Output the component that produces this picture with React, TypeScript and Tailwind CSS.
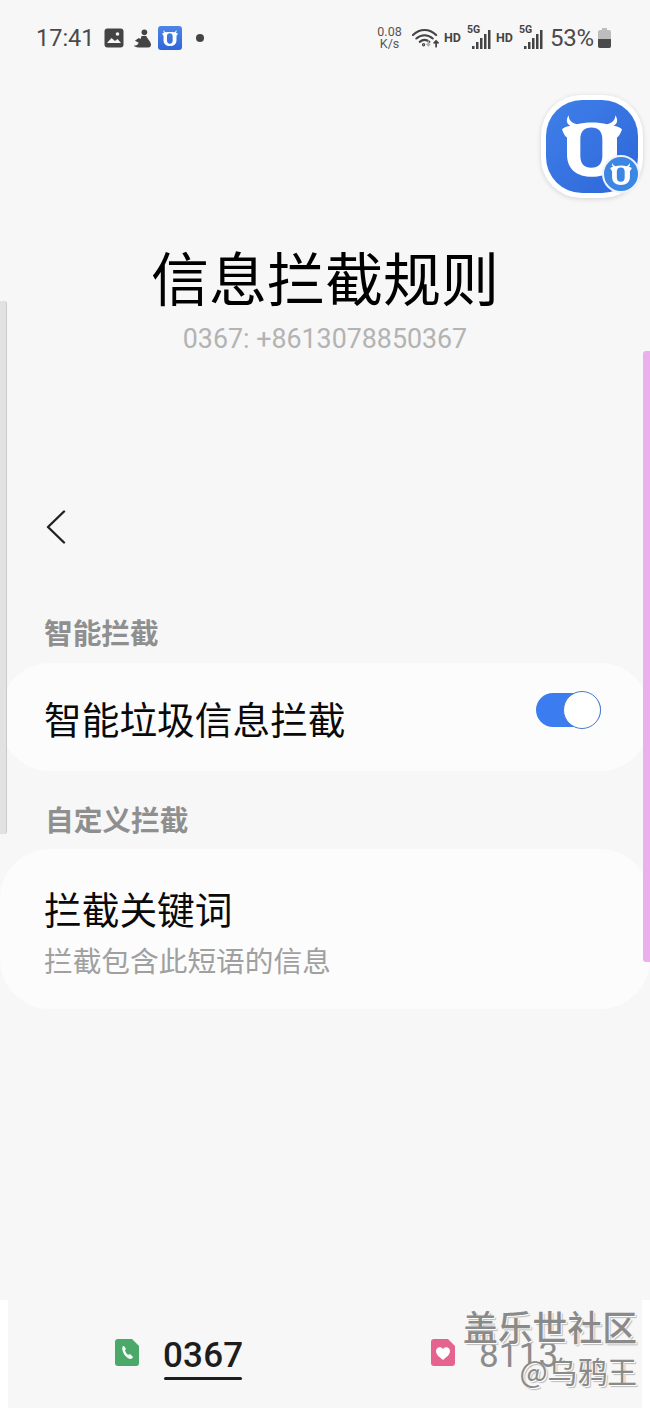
const cjk = "font-['Noto_Sans_CJK_SC','Noto_Sans',sans-serif]"
const roboto = "font-['Roboto','Noto_Sans_CJK_SC',sans-serif]"

function CowGlyph({ className }: { className?: string }) {
  return (
    <svg viewBox="0 0 180 185" className={className}>
      <path
        fill="#ffffff"
        fillRule="evenodd"
        d="M20 0C20 14 30 24 45 27C70 20 110 20 135 27C150 24 160 14 160 0C168 12 168 24 155 32C165 34 174 37 180 42C176 54 172 62 165 67V118C165 162 135 185 90 185C45 185 15 162 15 118V67C8 62 4 54 0 42C6 37 15 34 25 32C12 24 12 12 20 0ZM88 37C66 37 55 50 55 72V122C55 146 66 158 88 158C110 158 121 146 121 122V72C121 50 110 37 88 37Z"
      />
    </svg>
  )
}

function SignalIcon() {
  return (
    <div className="relative h-[24px] w-[24px]">
      <span className={`absolute -top-[2px] left-0 text-[10.500px] font-bold leading-[11px] text-[#444] ${roboto}`}>5G</span>
      <svg viewBox="0 0 24 24" className="absolute inset-0 h-full w-full" fill="#444">
        <rect x="5" y="20" width="2.500" height="3" />
        <rect x="9" y="16" width="2.500" height="7" />
        <rect x="13" y="12" width="2.500" height="11" />
        <rect x="17" y="8" width="2.500" height="15" />
        <rect x="21" y="4" width="2.500" height="19" />
      </svg>
    </div>
  )
}

function StatusBar() {
  return (
    <div className={`flex h-[76px] items-center justify-between pl-[36px] pr-[39px] text-[#444] ${roboto}`}>
      <div className="flex items-center">
        <span className="pt-[1px] text-[23.500px] text-[#4a4a4a]">17:41</span>
        <svg viewBox="0 0 20 20" className="ml-[9px] h-[20px] w-[20px]">
          <rect width="19" height="19" x="0.5" y="0.5" rx="3" fill="#444" />
          <circle cx="13.5" cy="6" r="1.8" fill="#f7f7f7" />
          <path d="M3 15l4.5-5 3.5 3 2.5-2 3.500 4z" fill="#f7f7f7" />
        </svg>
        <svg viewBox="0 0 18 20" className="ml-[10px] h-[20px] w-[17px]" fill="#444">
          <circle cx="11" cy="4" r="3" />
          <path d="M8 8h5c1 3 5 6 5 9 0 2-1 3-3 3H5c-3 0-5-1-5-2 3 0 4-1 5-3l-4-2 4-3 2 1z" />
        </svg>
        <div className="ml-[7px] flex h-[24px] w-[24px] items-center justify-center rounded-[3px] bg-gradient-to-b from-[#4d86e6] to-[#2f66d8]">
          <CowGlyph className="h-[16px] w-[16px]" />
        </div>
        <span className="ml-[14px] h-[8px] w-[8px] rounded-full bg-[#444]" />
      </div>
      <div className="flex items-center">
        <div className="w-[25px] text-center text-[12.500px] leading-[12px] text-[#555]">
          <div>0.08</div>
          <div>K/s</div>
        </div>
        <svg viewBox="0 0 28 22" className="ml-[10px] h-[22px] w-[27px]" fill="none" stroke="#444" strokeWidth="2.200" strokeLinecap="round">
          <path d="M1 8c7-7 17-7 24 0" />
          <path d="M4.500 11.500c5-4.500 12-4.500 17 0" />
          <path d="M8 15c3-2.500 7-2.500 10 0" />
          <circle cx="12" cy="18" r="0.6" />
          <path d="M17 14v5m-1.500-1.500L17 19l1.500-1.500" stroke="#aaa" strokeWidth="1.500" />
          <path d="M25 20v-6m-2 2l2-2 2 2" strokeWidth="1.800" />
        </svg>
        <span className="ml-[5px] w-[17px] text-[12.500px] font-bold text-[#444]">HD</span>
        <div className="ml-[6px]"><SignalIcon /></div>
        <span className="ml-[5px] w-[17px] text-[12.500px] font-bold text-[#444]">HD</span>
        <div className="ml-[6px]"><SignalIcon /></div>
        <span className="ml-[7px] text-[24px] leading-none tracking-[-0.2px] text-[#4a4a4a]">53%</span>
        <svg viewBox="0 0 13 20" className="ml-[4px] h-[20px] w-[13px]">
          <path d="M4 0h5v2h2a2 2 0 012 2v14a2 2 0 01-2 2H2a2 2 0 01-2-2V4a2 2 0 012-2h2z" fill="#bdbdbd" />
          <path d="M0 11h13v7a2 2 0 01-2 2H2a2 2 0 01-2-2z" fill="#4a4a4a" />
        </svg>
      </div>
    </div>
  )
}

function SectionLabel({ text, className }: { text: string; className: string }) {
  return <div className={`font-bold leading-[40px] text-[#8f8f8f] ${className}`}>{text}</div>
}

function BottomTab({ icon, label, active }: { icon: React.ReactNode; label: string; active?: boolean }) {
  return (
    <div className="flex w-[160px] items-start">
      <div className="mt-[4px] w-[24px]">{icon}</div>
      <div className={`ml-[24px] flex flex-col items-center ${roboto}`}>
        <span className={active ? 'text-[35px] font-medium leading-[41px] tracking-[0.2px] text-[#1d1d1d]' : 'text-[35px] leading-[41px] tracking-[0.2px] text-[#8c8c8c]'}>{label}</span>
        {active && <span className="mt-[1px] h-[3px] w-[78px] rounded-full bg-[#1d1d1d]" />}
      </div>
    </div>
  )
}

function SimIcon({ color, children }: { color: string; children: React.ReactNode }) {
  return (
    <svg viewBox="0 0 24 27" className="h-[27px] w-[24px]">
      <path d="M3 0h14l7 7v17a3 3 0 01-3 3H3a3 3 0 01-3-3V3a3 3 0 013-3z" fill={color} />
      {children}
    </svg>
  )
}

export default function App() {
  return (
    <div className={`relative flex h-[1408px] w-[650px] flex-col overflow-hidden bg-[#f7f7f7] ${cjk}`}>
      <StatusBar />

      {/* Title */}
      <div className="mt-[162px] text-center text-[58px] leading-[76px] text-[#000]">信息拦截规则</div>
      <div className={`mt-[10px] text-center text-[26.800px] leading-[30px] text-[#b3b3b3] ${roboto}`}>0367: +8613078850367</div>

      {/* Back */}
      <div className="mt-[156px] pl-[46px]">
        <svg viewBox="0 0 20 34" className="h-[34px] w-[20px]" fill="none" stroke="#222" strokeWidth="2.400" strokeLinecap="round" strokeLinejoin="round">
          <path d="M18 1.500L2 17l16 15.500" />
        </svg>
      </div>

      <SectionLabel text="智能拦截" className="ml-[44px] mt-[68px] text-[28.700px]" />

      {/* Smart block card */}
      <div className="mt-[11px] flex h-[108px] items-center justify-between rounded-[50px] bg-[#fcfcfc] pl-[44px] pr-[49px]">
        <span className="pt-[1px] text-[37.700px] leading-[52px] text-[#0a0a0a]">智能垃圾信息拦截</span>
        <div className="relative mb-[14px] h-[34px] w-[65px] rounded-full bg-[#3b7cf0]">
          <span className="absolute -top-[2px] right-0 h-[38px] w-[38px] rounded-full border-[1.500px] border-[#4a7cc8] bg-white" />
        </div>
      </div>

      <SectionLabel text="自定义拦截" className="ml-[45px] mt-[28px] text-[28.700px]" />

      {/* Keywords card */}
      <div className="mt-[10px] flex h-[160px] flex-col rounded-[50px] bg-[#fcfcfc] pl-[44px] pt-[33px]">
        <span className="text-[37.700px] leading-[52px] text-[#0a0a0a]">拦截关键词</span>
        <span className="mt-[6px] text-[28.700px] leading-[40px] text-[#a0a0a0]">拦截包含此短语的信息</span>
      </div>

      {/* Bottom tabs */}
      <div className="mt-auto flex h-[108px] bg-[#ffffff]">
        <div className="ml-[8px] flex h-full w-[634px] bg-[#f7f7f7] pl-[107px] pt-[35px]">
          <BottomTab
            active
            label="0367"
            icon={
              <SimIcon color="#4aa868">
                <path d="M8 7c-1 1-1 3 0 6s4 6 7 7c1 0 3-1 3-2l-3-3-2 1c-1-1-3-3-3-5l1-1-2-3z" fill="#fff" />
              </SimIcon>
            }
          />
          <div className="ml-[156px]">
            <BottomTab
              label="8113"
              icon={
                <SimIcon color="#e4648f">
                  <path d="M12 21c-5-4-7-6-7-9 0-4 5-5 7-2 2-3 7-2 7 2 0 3-2 5-7 9z" fill="#fff" />
                </SimIcon>
              }
            />
          </div>
        </div>
      </div>

      {/* Floating bubble */}
      <div className="absolute left-[541px] top-[95px] h-[103px] w-[102px] rounded-[40px] bg-white shadow-[0_1px_5px_rgba(0,0,0,0.15)]">
        <div className="absolute inset-[5px] flex items-center justify-center rounded-[36px] bg-gradient-to-br from-[#3f80ea] to-[#2f66d8]">
          <CowGlyph className="mb-[2px] h-[62px] w-[60px]" />
        </div>
        <div className="absolute left-[61px] top-[60px] flex h-[38px] w-[38px] items-center justify-center rounded-full border-[2px] border-[#eef3fb] bg-[#3c86e4]">
          <CowGlyph className="h-[22px] w-[22px]" />
        </div>
      </div>

      {/* Edge scroll handles */}
      <div className="absolute left-0 top-[301px] h-[533px] w-[7px] rounded-r-[3px] border-r border-[#c9c9c9] bg-[#e2e2e2]" />
      <div className="absolute right-0 top-[351px] h-[611px] w-[7px] rounded-l-[3px] bg-[#edaeee]" />

      {/* Watermark */}
      <div className="absolute right-[13px] top-[1305px] text-right leading-none text-[#8a8a8a]">
        <div className="text-[34.800px] font-medium leading-[42px] [text-shadow:1px_1px_0_#ffffff,2px_2px_1px_#bbbbbb]">盖乐世社区</div>
        <div className="mt-[5px] text-[29.800px] leading-[36px] [text-shadow:1px_1px_0_#ffffff,2px_2px_1px_#bbbbbb]">@乌鸦王</div>
      </div>
    </div>
  )
}
